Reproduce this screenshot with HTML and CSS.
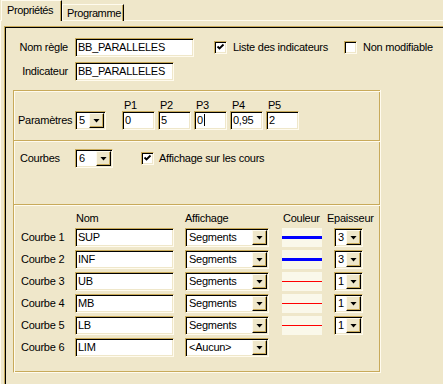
FILE: index.html
```html
<!DOCTYPE html>
<html lang="fr">
<head>
  <meta charset="UTF-8" />
  <title>Propriétés</title>
  <link rel="stylesheet" href="styles.css">
</head>
<body>
  <div class="tabs">
    <div class="tab active">Propriétés</div>
    <div class="tab">Programme</div>
  </div>
  <div class="sheet">
    <div class="frame">
      <div class="head">
        <div class="row">
          <span class="lbl">Nom règle</span>
          <span class="edit w119">BB_PARALLELES</span>
          <span class="chk first"><span class="box on"></span>Liste des indicateurs</span>
          <span class="chk"><span class="box"></span>Non modifiable</span>
        </div>
        <div class="row">
          <span class="lbl">Indicateur</span>
          <span class="edit w99">BB_PARALLELES</span>
        </div>
      </div>

      <div class="panel">
        <div class="sec params">
          <span class="plbl">Paramètres</span>
          <span class="combo w31"><span class="val">5</span><span class="btn"></span></span>
          <div class="pgrid">
            <div class="pcol"><span class="ptitle">P1</span><span class="edit w33">0</span></div>
            <div class="pcol"><span class="ptitle">P2</span><span class="edit w33">5</span></div>
            <div class="pcol"><span class="ptitle">P3</span><span class="edit w33">0<span class="caret"></span></span></div>
            <div class="pcol"><span class="ptitle">P4</span><span class="edit w33">0,95</span></div>
            <div class="pcol"><span class="ptitle">P5</span><span class="edit w33">2</span></div>
          </div>
        </div>

        <div class="sec courbes">
          <span class="clbl">Courbes</span>
          <span class="combo w38"><span class="val">6</span><span class="btn"></span></span>
          <span class="chk cours"><span class="box on"></span>Affichage sur les cours</span>
        </div>

        <div class="sec table">
          <span class="th"></span>
          <span class="th nom">Nom</span>
          <span class="th">Affichage</span>
          <span class="th coul">Couleur</span>
          <span class="th">Epaisseur</span>

          <span class="rl">Courbe 1</span>
          <span class="edit w99">SUP</span>
          <span class="combo w84"><span class="val">Segments</span><span class="btn"></span></span>
          <span class="swatch"><span class="line blue3"></span></span>
          <span class="combo w29 ep"><span class="val">3</span><span class="btn"></span></span>

          <span class="rl">Courbe 2</span>
          <span class="edit w99">INF</span>
          <span class="combo w84"><span class="val">Segments</span><span class="btn"></span></span>
          <span class="swatch"><span class="line blue3"></span></span>
          <span class="combo w29 ep"><span class="val">3</span><span class="btn"></span></span>

          <span class="rl">Courbe 3</span>
          <span class="edit w99">UB</span>
          <span class="combo w84"><span class="val">Segments</span><span class="btn"></span></span>
          <span class="swatch"><span class="line red1"></span></span>
          <span class="combo w29 ep"><span class="val">1</span><span class="btn"></span></span>

          <span class="rl">Courbe 4</span>
          <span class="edit w99">MB</span>
          <span class="combo w84"><span class="val">Segments</span><span class="btn"></span></span>
          <span class="swatch"><span class="line red1"></span></span>
          <span class="combo w29 ep"><span class="val">1</span><span class="btn"></span></span>

          <span class="rl">Courbe 5</span>
          <span class="edit w99">LB</span>
          <span class="combo w84"><span class="val">Segments</span><span class="btn"></span></span>
          <span class="swatch"><span class="line red1"></span></span>
          <span class="combo w29 ep"><span class="val">1</span><span class="btn"></span></span>

          <span class="rl">Courbe 6</span>
          <span class="edit w99">LIM</span>
          <span class="combo w84"><span class="val">&lt;Aucun&gt;</span><span class="btn"></span></span>
          <span></span>
          <span></span>
        </div>
      </div>
    </div>
  </div>
</body>
</html>
```

FILE: styles.css
```css
* {
  box-sizing: border-box;
}
body {
  margin: 0;
  width: 443px;
  height: 384px;
  overflow: hidden;
  background: #efe7ca;
  font-family: "Liberation Sans", Arial, sans-serif;
  font-size: 11px;
  line-height: 13px;
  letter-spacing: -0.25px;
  color: #000;
}

/* onglets */
.tabs {
  display: flex;
  align-items: flex-end;
  height: 21px;
  padding-left: 1px;
}
.tab {
  height: 17px;
  padding: 2px 0 0 4px;
  width: 62px;
  white-space: nowrap;
  letter-spacing: -0.4px;
  border-top: 1px solid #fffbee;
  border-left: 1px solid #fffbee;
  border-right: 1px solid #000;
  box-shadow: inset -1px 0 0 #c8aa5a;
}
.tab.active {
  position: relative;
  z-index: 1;
  height: 21px;
  width: 61px;
  padding: 3px 0 0 5px;
  background: #efe7ca;
}
.sheet {
  margin-top: -1px;
  border-top: 1px solid #fffbee;
  border-left: 1px solid #fffbee;
  padding: 5px 0 0 3px;
  height: 364px;
}
.frame {
  height: 100%;
  border-top: 1px solid #c8aa5a;
  border-left: 1px solid #c8aa5a;
  box-shadow: inset 1px 1px 0 #000;
  padding: 1px 0 0 1px;
}

/* champs */
.edit {
  display: inline-block;
  height: 19px;
  padding: 2px 0 0 2px;
  background: #fff;
  border-top: 1px solid #c8aa5a;
  border-left: 1px solid #c8aa5a;
  border-right: 1px solid #fffbee;
  border-bottom: 1px solid #fffbee;
  box-shadow: inset 1px 1px 0 #000, inset -1px -1px 0 #efe7ca;
  white-space: nowrap;
}
.w119 { width: 119px; }
.w99 { width: 99px; }
.w33 { width: 33px; }
.caret {
  display: inline-block;
  width: 1px;
  height: 12px;
  margin-left: 1px;
  vertical-align: top;
  background: #000;
}

.combo {
  display: inline-flex;
  height: 19px;
  padding: 1px;
  background: #fff;
  border-top: 1px solid #c8aa5a;
  border-left: 1px solid #c8aa5a;
  border-right: 1px solid #fffbee;
  border-bottom: 1px solid #fffbee;
  box-shadow: inset 1px 1px 0 #000, inset -1px -1px 0 #efe7ca;
}
.combo .val {
  flex: 1;
  padding: 1px 0 0 2px;
  white-space: nowrap;
  overflow: hidden;
}
.combo .btn {
  width: 15px;
  display: flex;
  align-items: center;
  justify-content: center;
  background: #efe7ca;
  border-top: 1px solid #fffbee;
  border-left: 1px solid #fffbee;
  border-right: 1px solid #000;
  border-bottom: 1px solid #000;
  box-shadow: inset -1px -1px 0 #c8aa5a;
}
.combo .btn::after {
  content: "";
  width: 7px;
  height: 4px;
  background: #000;
  clip-path: polygon(0 0, 100% 0, 50% 100%);
}
.w31 { width: 31px; }
.w38 { width: 38px; }
.w84 { width: 84px; }
.w29 { width: 29px; }

.chk {
  display: inline-flex;
  align-items: center;
  white-space: nowrap;
}
.box {
  width: 13px;
  height: 13px;
  margin-right: 6px;
  background: #fff;
  border-top: 1px solid #c8aa5a;
  border-left: 1px solid #c8aa5a;
  border-right: 1px solid #fffbee;
  border-bottom: 1px solid #fffbee;
  box-shadow: inset 1px 1px 0 #000, inset -1px -1px 0 #efe7ca;
}
.box.on {
  background: #fff url("data:image/svg+xml,%3Csvg xmlns='http://www.w3.org/2000/svg' width='11' height='11'%3E%3Cpath d='M2.5 4.5 L4.5 6.5 L8.5 2.5' stroke='%23000' stroke-width='1.8' fill='none'/%3E%3C/svg%3E") no-repeat 0 0;
}

/* entête */
.head {
  padding: 10px 0 0 0;
  height: 62px;
}
.row {
  display: flex;
  align-items: center;
  height: 19px;
  margin-bottom: 5px;
}
.lbl {
  width: 62px;
  margin-right: 7px;
  text-align: right;
}
.chk.first {
  margin-left: 20px;
  width: 130px;
}

/* panneau */
.panel {
  margin-left: 7px;
  width: 368px;
  height: 283px;
  border-left: 1px solid #c8aa5a;
  border-right: 1px solid #fffbee;
  border-bottom: 1px solid #fffbee;
  box-shadow: inset -1px -1px 0 #c8aa5a;
  display: flex;
  flex-direction: column;
}
.sec {
  border-top: 1px solid #c8aa5a;
  box-shadow: inset 1px 1px 0 #fffbee;
}
.params {
  height: 50px;
  display: flex;
  align-items: flex-end;
  padding: 0 0 10px 4px;
}
.plbl {
  width: 57px;
  line-height: 19px;
}
.pgrid {
  display: flex;
  gap: 3px;
  margin-left: 16px;
}
.pcol {
  display: flex;
  flex-direction: column;
}
.ptitle {
  height: 12px;
  line-height: 12px;
  padding-left: 2px;
}

.courbes {
  height: 64px;
  display: flex;
  align-items: flex-start;
  padding: 8px 0 0 6px;
}
.clbl {
  width: 55px;
  line-height: 19px;
}
.chk.cours {
  margin-left: 28px;
  height: 19px;
}
.chk.cours .box {
  margin-right: 5px;
}

.table {
  flex: 1;
  display: grid;
  grid-template-columns: 54px 110px 97px 45px 40px;
  grid-template-rows: 13px;
  grid-auto-rows: 19px;
  row-gap: 3px;
  align-content: start;
  align-items: center;
  padding: 7px 0 0 7px;
}
.th.nom,
.th.coul {
  padding-left: 1px;
}
.table .edit,
.table .combo {
  align-self: stretch;
}
.swatch {
  width: 40px;
  height: 19px;
  display: flex;
  flex-direction: column;
  justify-content: center;
  background: #faf8ea;
}
.line {
  display: block;
  width: 100%;
}
.blue3 {
  border-top: 3px solid #0000ff;
}
.red1 {
  border-top: 1px solid #ff0000;
}
.combo.ep {
  margin-left: 7px;
}
```
